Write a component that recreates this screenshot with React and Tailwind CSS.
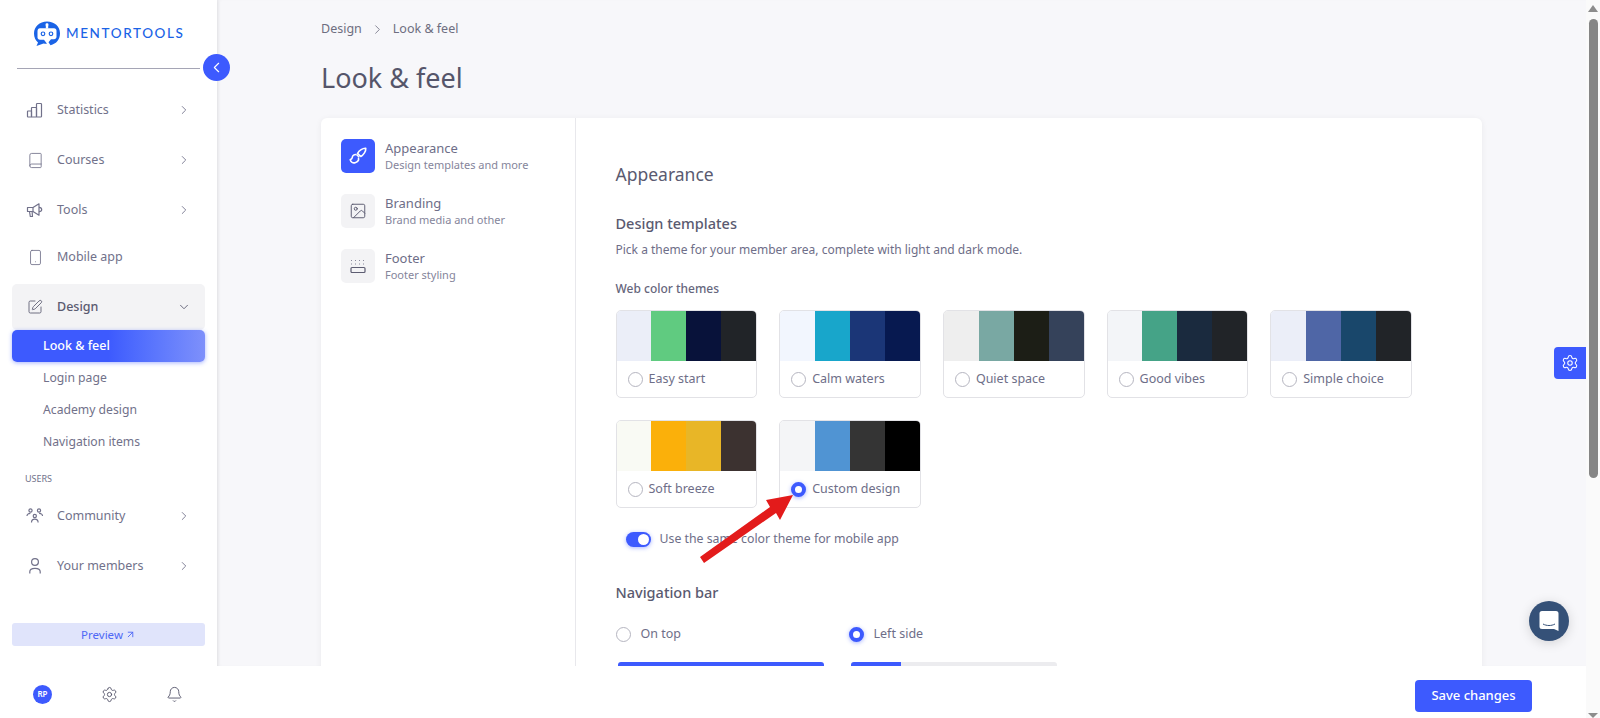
import { ChevronLeft, ChevronRight, ChevronDown, ArrowUpRight, Settings, Bell, Image, Book, Smartphone, SquarePen } from 'lucide-react'

const font = { fontFamily: '"Noto Sans", sans-serif' }

const themes = [
  { name: 'Easy start', colors: ['bg-[#ebeef8]', 'bg-[#60cb80]', 'bg-[#08123a]', 'bg-[#212428]'] },
  { name: 'Calm waters', colors: ['bg-[#f2f6fe]', 'bg-[#18a6cb]', 'bg-[#1b3677]', 'bg-[#071950]'] },
  { name: 'Quiet space', colors: ['bg-[#eeeeee]', 'bg-[#79a8a3]', 'bg-[#1c1e16]', 'bg-[#35425a]'] },
  { name: 'Good vibes', colors: ['bg-[#f3f5f8]', 'bg-[#45a387]', 'bg-[#1a2a3e]', 'bg-[#212428]'] },
  { name: 'Simple choice', colors: ['bg-[#ebeef8]', 'bg-[#4f66a6]', 'bg-[#19476b]', 'bg-[#212428]'] },
  { name: 'Soft breeze', colors: ['bg-[#f9faf4]', 'bg-[#fbb00a]', 'bg-[#e8b627]', 'bg-[#3c3230]'] },
  { name: 'Custom design', colors: ['bg-[#f4f5f7]', 'bg-[#5094d3]', 'bg-[#343434]', 'bg-[#000000]'], selected: true },
]

function StatsIcon() {
  return (
    <svg width="18" height="18" viewBox="0 0 18 18" fill="none" stroke="currentColor" strokeWidth="1.2">
      <rect x="1.500" y="10" width="4" height="6" rx="0.5" />
      <rect x="5.500" y="6.500" width="5" height="9.500" rx="0.5" />
      <rect x="10.500" y="2.500" width="5" height="13.500" rx="0.8" />
    </svg>
  )
}

function MegaphoneIcon() {
  return (
    <svg width="18" height="18" viewBox="0 0 18 18" fill="none" stroke="currentColor" strokeWidth="1.2" strokeLinejoin="round">
      <path d="M1.500 6.500h5.500L13 2.800v11.400L7 10.500H1.500z" />
      <path d="M7 6.500v4M3.500 10.500l.8 5h2.200l-.4-5M13 6.300c1.700.1 2.700 1 2.700 2.200s-1 2.100-2.700 2.200" />
    </svg>
  )
}

function CommunityIcon() {
  return (
    <svg width="18" height="18" viewBox="0 0 18 18" fill="none" stroke="currentColor" strokeWidth="1.2">
      <circle cx="4.500" cy="3.500" r="1.600" />
      <circle cx="13" cy="3.500" r="1.600" />
      <circle cx="8.800" cy="9" r="1.600" />
      <path d="M1 9c0-1.600 1.200-2.600 3.400-2.600M16.500 9c0-1.600-1.200-2.600-3.400-2.600M5.500 15.500c0-2.200 1.300-3.300 3.300-3.300s3.300 1.100 3.300 3.300" />
    </svg>
  )
}

function MemberIcon() {
  return (
    <svg width="18" height="18" viewBox="0 0 18 18" fill="none" stroke="currentColor" strokeWidth="1.2">
      <circle cx="9" cy="5" r="3.400" />
      <path d="M3.800 16.500v-1.800c0-2.200 1.800-3.400 5.200-3.400s5.200 1.200 5.200 3.400v1.800" />
    </svg>
  )
}

function BrushIcon() {
  return (
    <svg width="20" height="20" viewBox="0 0 18 18" fill="none" stroke="currentColor" strokeWidth="1.400" strokeLinejoin="round">
      <path d="M16 2c.3 2.600-2 6-4.500 7.500L8.600 6.600C10 4 13.300 1.700 16 2z" />
      <path d="M7.700 7.700c-2.200-.3-3.700 1-3.900 2.700-.1 1-.9 1.500-1.800 2 .5 2 2.300 3.200 4.400 2.600 2.300-.6 3.500-2.500 3-4.500" />
      <path d="M7.700 7.700l2.400 2.400" />
    </svg>
  )
}

function FooterIcon() {
  return (
    <svg width="18" height="18" viewBox="0 0 18 18" fill="none">
      <path d="M2 3.500h14M2 7h14" stroke="#8a8a9c" strokeWidth="1" strokeDasharray="1 3" />
      <rect x="2" y="10.500" width="14" height="5" rx="1" stroke="#5d5d72" strokeWidth="1.200" />
    </svg>
  )
}

function NavItem({ icon, label, arrow = true, className = 'h-[50px]' }) {
  return (
    <div className={`flex items-center pl-[26px] pr-[26px] text-[#71718a] ${className}`}>
      <span className="w-[18px] flex justify-center shrink-0">{icon}</span>
      <span className="ml-[13px] flex-1 text-[12.5px]">{label}</span>
      {arrow && <ChevronRight size={14} strokeWidth={1.5} />}
    </div>
  )
}

function Radio({ selected }) {
  if (selected) {
    return <span className="block w-[15px] h-[15px] rounded-full border-[4px] border-[#3d5afe] bg-white shadow-[0_1px_4px_rgba(61,90,254,0.45)] shrink-0" />
  }
  return <span className="block w-[15px] h-[15px] rounded-full border border-[#b5b5c0] bg-white shrink-0" />
}

function ThemeCard({ theme }) {
  return (
    <div className="w-[141.7px] h-[88px] rounded-[5px] border border-[#e2e2e6] bg-white overflow-hidden">
      <div className="flex h-[50px]">
        {theme.colors.map((c, i) => (
          <div key={i} className={`flex-1 ${c}`} />
        ))}
      </div>
      <div className="flex items-center h-[37px] pl-[11px]">
        <Radio selected={theme.selected} />
        <span className="ml-[6px] text-[12.5px] text-[#6e6e88]">{theme.name}</span>
      </div>
    </div>
  )
}

function SideTab({ icon, title, sub, active }) {
  return (
    <div className="flex items-center gap-[10px]">
      <div className={`w-[34px] h-[34px] rounded-[5px] flex items-center justify-center ${active ? 'bg-[#3d5afe] text-white' : 'bg-[#f3f3f5] text-[#5d5d72]'}`}>
        {icon}
      </div>
      <div>
        <div className="text-[13px] leading-[18px] text-[#6e6e88]">{title}</div>
        <div className="text-[11px] leading-[16px] text-[#85859b]">{sub}</div>
      </div>
    </div>
  )
}

export default function App() {
  return (
    <div className="relative flex h-screen overflow-hidden bg-white" style={font}>
      {/* Sidebar */}
      <aside className="w-[217px] shrink-0 flex flex-col bg-white shadow-[1px_0_3px_rgba(0,0,0,0.06)] z-10">
        <div className="flex items-center h-[68px] pl-[33px] pb-[1px]">
          <svg width="28" height="27" viewBox="0 0 28 27" className="shrink-0">
            <path d="M14 1.500C6.500 1.500 1 6.500 1 13.500c0 4 1.600 7 4 9l-1.500 3.500 7-2.500c1 .2 2 .3 3.500.3l-3-4H7c-1.500 0-2.500-1-2.500-2.500v-6C4.500 9.300 5.500 8.300 7 8.300h14c1.500 0 2.500 1 2.500 2.500v6c0 1.500-1 2.500-2.500 2.500h-3l-2.500 3 2 3c6-1.500 9.500-6 9.500-12C27 6.500 21.500 1.500 14 1.500z" fill="#1a63e6" />
            <rect x="12.800" y="3.500" width="2.400" height="5" fill="#fff" />
            <circle cx="14" cy="5" r="1.400" fill="#fff" />
            <circle cx="10" cy="13.800" r="1.800" fill="none" stroke="#1a63e6" strokeWidth="1.200" />
            <circle cx="18" cy="13.800" r="1.800" fill="none" stroke="#1a63e6" strokeWidth="1.200" />
          </svg>
          <span className="ml-[5px] text-[13.5px] tracking-[1.6px] font-medium text-[#1a63e6]" style={{ fontFamily: '"Lato", sans-serif' }}>MENTORTOOLS</span>
        </div>
        <div className="mx-[17px] h-px bg-[#a5a5b5]" />

        <nav className="mt-[16px]">
          <NavItem icon={<StatsIcon />} label="Statistics" />
          <NavItem icon={<Book size={17} strokeWidth={1.2} />} label="Courses" />
          <NavItem icon={<MegaphoneIcon />} label="Tools" />
          <NavItem icon={<Smartphone size={17} strokeWidth={1.2} />} label="Mobile app" arrow={false} className="h-[44px]" />
          <div className="mx-[12px] mt-[5px] h-[46px] rounded-[5px] bg-[#f3f3f5] flex items-center pl-[14px] pr-[14px] text-[#5a5a70]">
            <span className="w-[18px] flex justify-center"><SquarePen size={16} strokeWidth={1.3} /></span>
            <span className="ml-[13px] flex-1 text-[12.5px] font-medium">Design</span>
            <ChevronDown size={14} strokeWidth={1.5} />
          </div>
          <div className="mx-[12px] h-[32px] rounded-[5px] bg-gradient-to-r from-[#3d5afe] from-50% to-[#7e90fb] flex items-center pl-[31px] text-[12.5px] font-medium text-white shadow-[0_1px_4px_rgba(61,90,254,0.45)]">
            Look &amp; feel
          </div>
          <div className="pl-[43px] text-[12.2px] text-[#71718a]">
            <div className="h-[31px] flex items-center mt-[1px]">Login page</div>
            <div className="h-[32px] flex items-center">Academy design</div>
            <div className="h-[32px] flex items-center">Navigation items</div>
          </div>
          <div className="pl-[25px] mt-[14px] text-[9px] leading-[14px] text-[#71718a]">USERS</div>
          <NavItem icon={<CommunityIcon />} label="Community" className="h-[50px] mt-[5px]" />
          <NavItem icon={<MemberIcon />} label="Your members" />
        </nav>

        <div className="mt-auto">
          <div className="mx-[12px] h-[23px] rounded-[3px] bg-[#e0e4fb] flex items-center justify-center gap-[2px] text-[11.5px] text-[#4f68f5]">
            Preview <ArrowUpRight size={11} />
          </div>
          <div className="mt-[24px] flex items-center justify-between h-[48px] pl-[33px] pr-[34px] text-[#55556b]">
            <span className="w-[19px] h-[19px] rounded-full bg-[#3d5afe] text-white text-[8px] font-semibold flex items-center justify-center">RP</span>
            <Settings size={17} strokeWidth={1.3} />
            <Bell size={17} strokeWidth={1.3} />
          </div>
        </div>
      </aside>

      {/* Main column */}
      <div className="flex-1 min-w-0 flex flex-col">
        <main className="flex-1 min-h-0 overflow-hidden bg-[#f7f7fa] pl-[104px] pr-[104px] shadow-[inset_3px_0_4px_-2px_rgba(0,0,0,0.05)]">
          <div className="flex items-center h-[20px] mt-[19px] text-[12.5px] text-[#6e6e80]">
            Design
            <ChevronRight size={15} strokeWidth={1.3} className="mx-[8px]" />
            Look &amp; feel
          </div>
          <h1 className="mt-[19px] text-[27px] leading-[40px] text-[#55556a]">Look &amp; feel</h1>

          <div className="mt-[20px] h-[700px] flex rounded-[6px] bg-white shadow-[0_1px_6px_rgba(0,0,0,0.06)]">
            <div className="w-[255px] shrink-0 border-r border-[#e8e8ec] pl-[20px] pt-[21px] flex flex-col gap-[21px]">
              <SideTab active icon={<BrushIcon />} title="Appearance" sub="Design templates and more" />
              <SideTab icon={<Image size={18} strokeWidth={1.300} />} title="Branding" sub="Brand media and other" />
              <SideTab icon={<FooterIcon />} title="Footer" sub="Footer styling" />
            </div>

            <div className="flex-1 pl-[39.5px] pt-[43px]">
              <h2 className="text-[17.5px] leading-[26px] text-[#5a5a70]">Appearance</h2>
              <h3 className="mt-[25px] text-[14.5px] leading-[22px] font-medium text-[#5a5a70]">Design templates</h3>
              <p className="mt-[7px] text-[12px] leading-[18px] text-[#6e6e88]">Pick a theme for your member area, complete with light and dark mode.</p>
              <p className="mt-[21px] text-[12px] leading-[18px] font-medium text-[#66667c]">Web color themes</p>
              <div className="mt-[12px] grid grid-cols-[repeat(5,141.7px)] gap-x-[22px] gap-y-[22px]">
                {themes.map((t) => (
                  <ThemeCard key={t.name} theme={t} />
                ))}
              </div>
              <div className="mt-[22px] ml-[10px] flex items-center">
                <span className="w-[25px] h-[15px] rounded-full bg-[#3d5afe] flex items-center justify-end pr-[2px] shadow-[0_1px_4px_rgba(61,90,254,0.45)]">
                  <span className="w-[11px] h-[11px] rounded-full bg-white" />
                </span>
                <span className="ml-[9px] text-[12.3px] text-[#6e6e88]">Use the same color theme for mobile app</span>
              </div>
              <h3 className="mt-[33px] text-[14.5px] leading-[22px] font-medium text-[#5a5a70]">Navigation bar</h3>
              <div className="mt-[21px] flex">
                <div className="w-[233px]">
                  <div className="flex items-center h-[20px] gap-[10px] text-[12.5px] text-[#6e6e88]">
                    <Radio />
                    On top
                  </div>
                  <div className="mt-[18px] ml-[2px] w-[206px] h-[6px] rounded-t-[3px] bg-[#3d5afe]" />
                </div>
                <div>
                  <div className="flex items-center h-[20px] gap-[10px] text-[12.5px] text-[#6e6e88]">
                    <Radio selected />
                    Left side
                  </div>
                  <div className="mt-[18px] ml-[2px] w-[206px] h-[6px] rounded-t-[3px] bg-[#ececef] overflow-hidden">
                    <div className="w-[50px] h-full bg-[#3d5afe]" />
                  </div>
                </div>
              </div>
            </div>
          </div>
        </main>

        <footer className="h-[52px] shrink-0 bg-white flex items-center justify-end pr-[54px] pt-[7px] z-10">
          <button className="w-[117px] h-[32px] rounded-[4px] bg-[#3d5afe] text-white text-[13px] font-medium">Save changes</button>
        </footer>
      </div>

      {/* Window scrollbar */}
      <div className="w-[14px] shrink-0 bg-[#fafafa] flex flex-col items-center justify-between z-10">
        <div className="w-full flex flex-col items-center">
          <span className="mt-[5px] w-0 h-0 border-x-[5px] border-x-transparent border-b-[7px] border-b-[#8c8c8c]" />
          <span className="mt-[7px] w-[9px] h-[459px] rounded-full bg-[#858585]" />
        </div>
        <span className="w-0 h-0 border-x-[5px] border-x-transparent border-t-[5px] border-t-[#8c8c8c]" />
      </div>

      {/* Floating bits */}
      <button className="absolute left-[203px] top-[54px] z-20 w-[27px] h-[27px] rounded-full bg-[#3d5afe] flex items-center justify-center text-white">
        <ChevronLeft size={17} strokeWidth={1.6} />
      </button>
      <div className="absolute right-[14px] top-[347px] w-[32px] h-[32px] rounded-l-[4px] bg-[#3d5afe] flex items-center justify-center text-white">
        <Settings size={18} strokeWidth={1.4} />
      </div>
      <div className="absolute left-[1529px] top-[601px] w-[40px] h-[40px] rounded-full bg-[#355178] shadow-[0_2px_12px_rgba(0,0,0,0.15)] flex items-center justify-center">
        <svg width="20" height="22" viewBox="0 0 20 22">
          <path d="M3 1h14a2.500 2.500 0 0 1 2.500 2.500V21l-4.500-2H3a2.500 2.500 0 0 1-2.500-2.500v-13A2.500 2.500 0 0 1 3 1z" fill="#fff" />
          <path d="M4 14c3.500 2 8.500 2 12 0" fill="none" stroke="#355178" strokeWidth="1" />
        </svg>
      </div>
      <svg className="absolute left-[695px] top-[488px] z-20" width="105" height="78" viewBox="0 0 105 78">
        <path d="M5 69 L75 19 L71 12 L98 7 L85 32 L81 25 L9 75 Z" fill="#e31b1b" />
      </svg>
    </div>
  )
}
